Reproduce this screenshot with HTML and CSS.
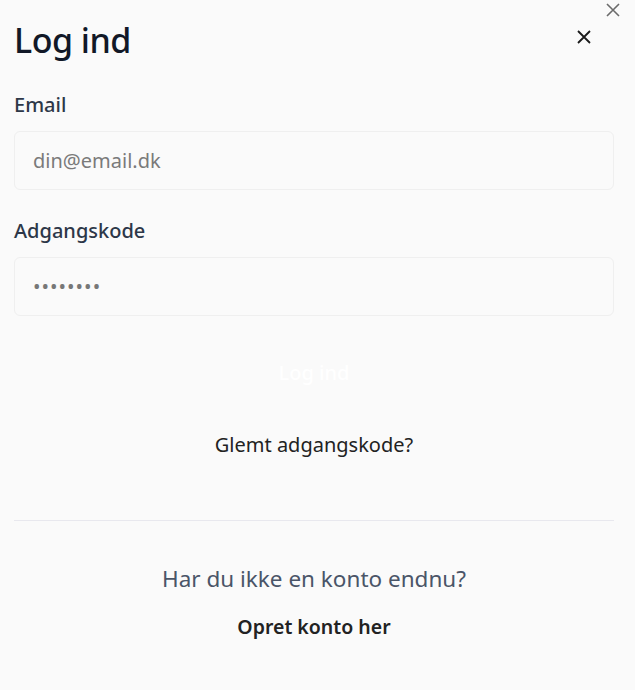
FILE: index.html
```html
<!DOCTYPE html>
<html lang="da">
<head>
<meta charset="utf-8">
<title>Log ind</title>
<link rel="stylesheet" href="styles.css">
</head>
<body>
<button class="outer-close" aria-label="Luk">
  <svg width="16" height="16" viewBox="0 0 16 16"><path d="M2 2L14 14M14 2L2 14" stroke="#6b6b6b" stroke-width="1.6" fill="none"/></svg>
</button>
<div class="modal">
  <header class="head">
    <h1 class="title">Log ind</h1>
    <button class="close" aria-label="Luk">
      <svg width="16" height="16" viewBox="0 0 16 16"><path d="M2 2L14 14M14 2L2 14" stroke="#1a1a1a" stroke-width="1.8" fill="none"/></svg>
    </button>
  </header>
  <form class="form">
    <label class="label" for="email">Email</label>
    <input class="input" id="email" type="email" placeholder="din@email.dk">
    <label class="label" for="pw">Adgangskode</label>
    <input class="input pw" id="pw" type="password" value="password">
    <button type="button" class="submit">Log ind</button>
    <a class="forgot" href="#">Glemt adgangskode?</a>
  </form>
  <hr class="divider">
  <p class="noacc">Har du ikke en konto endnu?</p>
  <a class="create" href="#">Opret konto her</a>
</div>
</body>
</html>
```
FILE: styles.css
```css
html, body {
  margin: 0;
  padding: 0;
  background: #fafafa;
  font-family: "Noto Sans", "Open Sans", sans-serif;
}
.outer-close {
  position: absolute;
  top: 2px;
  right: 14px;
  border: 0;
  background: none;
  padding: 0;
  width: 16px;
  height: 16px;
}
.modal {
  padding: 16px 21px 0 14px;
  display: flex;
  flex-direction: column;
}
.head {
  display: flex;
  justify-content: space-between;
  align-items: center;
  height: 48px;
}
.title {
  margin: 0;
  font-size: 34px;
  font-weight: 500;
  color: #111827;
  letter-spacing: -0.5px;
}
.close {
  border: 0;
  background: none;
  padding: 0;
  width: 16px;
  height: 16px;
  margin-right: 22px;
  margin-top: -6px;
}
.form {
  display: flex;
  flex-direction: column;
  margin-top: 27px;
}
.label {
  font-size: 20px;
  font-weight: 500;
  color: #2d3748;
  height: 27px;
  margin-bottom: 13px;
}
.input {
  box-sizing: border-box;
  width: 600px;
  height: 59px;
  border: 1px solid #efefef;
  border-radius: 6px;
  background: #fafafa;
  padding: 0 18px;
  font-family: inherit;
  font-size: 20px;
  color: #666;
  margin-bottom: 27px;
}
.input::placeholder { color: #7a7a7a; }
.pw { color: #777; letter-spacing: 1px; font-size: 20px; }
.submit {
  width: 600px;
  height: 58px;
  border: 0;
  background: none;
  color: #fff;
  font-family: inherit;
  font-size: 20px;
  font-weight: 500;
  margin-top: 0;
}
.forgot {
  align-self: center;
  width: 600px;
  text-align: center;
  margin-top: 30px;
  font-size: 20px;
  color: #222;
  text-decoration: none;
}
.divider {
  width: 600px;
  margin: 62px 0 0;
  border: 0;
  border-top: 1px solid #e8e8ee;
}
.noacc {
  width: 600px;
  text-align: center;
  margin: 42px 0 0;
  font-size: 22.5px;
  color: #4a5568;
}
.create {
  width: 600px;
  text-align: center;
  margin-top: 19px;
  font-size: 19.5px;
  font-weight: 600;
  color: #222;
  text-decoration: none;
}
```
